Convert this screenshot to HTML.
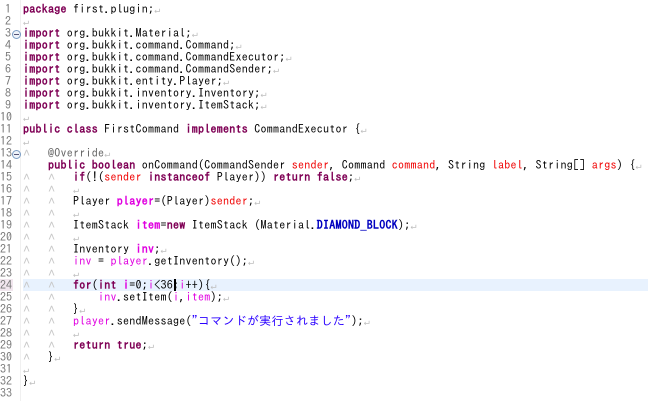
<!DOCTYPE html>
<html><head><meta charset="utf-8"><style>
html,body{margin:0;padding:0;background:#fff;width:648px;height:401px;overflow:hidden}
body{font-family:"IPAGothic","Liberation Mono",monospace;font-size:12px;line-height:12px;position:relative}
#ln{position:absolute;left:0;top:3px;width:11px;text-align:right;color:#787878}
#ln div,#code div{height:12px;line-height:12px;overflow:visible}
#code div{white-space:pre}
#gut{position:absolute;left:20px;top:0;width:1px;height:401px;background:#f0f0f0}
#hl{position:absolute;left:23px;top:279px;width:625px;height:12px;background:#e8f2fe}
#hln{position:absolute;left:0;top:279px;width:13px;height:12px;background:#f1e6ee}
#code{position:absolute;left:23px;top:3px;tab-size:4;-moz-tab-size:4;color:#000;letter-spacing:0.25px}
.k{color:#7f0055;font-weight:bold}
.p{color:#f00000}
.v{color:#e000e0}
.vd{color:#e000e0;font-weight:bold}
.c{color:#0000c0;font-weight:bold}
.s{color:#2a00ff}
.a{color:#646464}
.e{color:#c0c0c0;font-size:10px;line-height:10px}
.t{color:#c8c8c8}
.fold{position:absolute;left:12px;width:7px;height:7px;border:1px solid #7a9cc4;border-radius:50%;background:#eef3fa}
.fold:after{content:"";position:absolute;left:1px;top:3px;width:5px;height:1px;background:#557}
#cur{position:absolute;left:174px;top:279px;width:2px;height:12px;background:#000}
</style></head><body>
<div id="gut"></div>
<div id="hl"></div><div id="hln"></div>
<div id="ln"><div>1</div><div>2</div><div>3</div><div>4</div><div>5</div><div>6</div><div>7</div><div>8</div><div>9</div><div>10</div><div>11</div><div>12</div><div>13</div><div>14</div><div>15</div><div>16</div><div>17</div><div>18</div><div>19</div><div>20</div><div>21</div><div>22</div><div>23</div><div>24</div><div>25</div><div>26</div><div>27</div><div>28</div><div>29</div><div>30</div><div>31</div><div>32</div><div>33</div></div>
<div class="fold" style="top:30px"></div>
<div class="fold" style="top:150px"></div>
<div id="code"><div><span class="k">package</span> first.plugin;<span class="e">↵</span></div><div><span class="e">↵</span></div><div><span class="k">import</span> org.bukkit.Material;<span class="e">↵</span></div><div><span class="k">import</span> org.bukkit.command.Command;<span class="e">↵</span></div><div><span class="k">import</span> org.bukkit.command.CommandExecutor;<span class="e">↵</span></div><div><span class="k">import</span> org.bukkit.command.CommandSender;<span class="e">↵</span></div><div><span class="k">import</span> org.bukkit.entity.Player;<span class="e">↵</span></div><div><span class="k">import</span> org.bukkit.inventory.Inventory;<span class="e">↵</span></div><div><span class="k">import</span> org.bukkit.inventory.ItemStack;<span class="e">↵</span></div><div><span class="e">↵</span></div><div><span class="k">public</span> <span class="k">class</span> FirstCommand <span class="k">implements</span> CommandExecutor {<span class="e">↵</span></div><div><span class="e">↵</span></div><div><span class="t">˄</span>	<span class="a">@Override</span><span class="e">↵</span></div><div>	<span class="k">public</span> <span class="k">boolean</span> onCommand(CommandSender <span class="p">sender</span>, Command <span class="p">command</span>, String <span class="p">label</span>, String[] <span class="p">args</span>) {<span class="e">↵</span></div><div><span class="t">˄</span>	<span class="t">˄</span>	<span class="k">if</span>(!(<span class="p">sender</span> <span class="k">instanceof</span> Player)) <span class="k">return</span> <span class="k">false</span>;<span class="e">↵</span></div><div><span class="t">˄</span>	<span class="t">˄</span>	<span class="e">↵</span></div><div><span class="t">˄</span>	<span class="t">˄</span>	Player <span class="vd">player</span>=(Player)<span class="p">sender</span>;<span class="e">↵</span></div><div><span class="t">˄</span>	<span class="t">˄</span>	<span class="e">↵</span></div><div><span class="t">˄</span>	<span class="t">˄</span>	ItemStack <span class="vd">item</span>=<span class="k">new</span> ItemStack (Material.<span class="c">DIAMOND_BLOCK</span>);<span class="e">↵</span></div><div><span class="t">˄</span>	<span class="t">˄</span>	<span class="e">↵</span></div><div><span class="t">˄</span>	<span class="t">˄</span>	Inventory <span class="vd">inv</span>;<span class="e">↵</span></div><div><span class="t">˄</span>	<span class="t">˄</span>	<span class="v">inv</span> = <span class="v">player</span>.getInventory();<span class="e">↵</span></div><div><span class="t">˄</span>	<span class="t">˄</span>	<span class="e">↵</span></div><div><span class="t">˄</span>	<span class="t">˄</span>	<span class="k">for</span>(<span class="k">int</span> <span class="vd">i</span>=0;<span class="v">i</span>&lt;36;<span class="v">i</span>++){<span class="e">↵</span></div><div><span class="t">˄</span>	<span class="t">˄</span>		<span class="v">inv</span>.setItem(<span class="v">i</span>,<span class="v">item</span>);<span class="e">↵</span></div><div><span class="t">˄</span>	<span class="t">˄</span>	}<span class="e">↵</span></div><div><span class="t">˄</span>	<span class="t">˄</span>	<span class="v">player</span>.sendMessage(<span class="s">"コマンドが実行されました"</span>);<span class="e">↵</span></div><div><span class="t">˄</span>	<span class="t">˄</span>	<span class="e">↵</span></div><div><span class="t">˄</span>	<span class="t">˄</span>	<span class="k">return</span> <span class="k">true</span>;<span class="e">↵</span></div><div><span class="t">˄</span>	}<span class="e">↵</span></div><div><span class="e">↵</span></div><div>}<span class="e">↵</span></div></div>
<div id="cur"></div>
</body></html>
